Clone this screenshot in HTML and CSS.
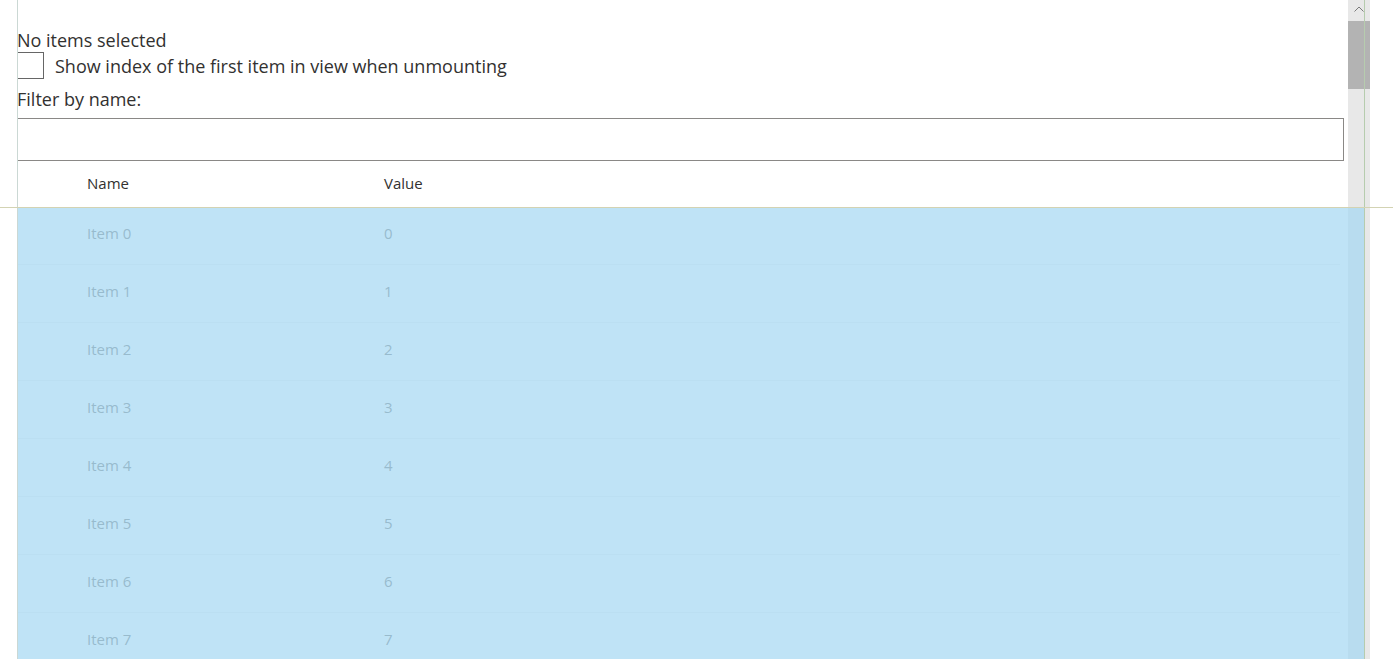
FILE: index.html
```html
<!DOCTYPE html>
<html>
<head>
<meta charset="utf-8">
<link rel="stylesheet" href="styles.css">
</head>
<body>
<div class="page">
  <div class="content">
    <div class="status">No items selected</div>
    <label class="check-row">
      <span class="check-box"></span>
      <span class="check-label">Show index of the first item in view when unmounting</span>
    </label>
    <div class="filter-label">Filter by name:</div>
    <div class="filter-input"></div>
    <div class="list">
      <div class="row header">
        <div class="cell name">Name</div>
        <div class="cell value">Value</div>
      </div>
      <div class="row"><div class="cell name">Item 0</div><div class="cell value">0</div></div>
      <div class="row"><div class="cell name">Item 1</div><div class="cell value">1</div></div>
      <div class="row"><div class="cell name">Item 2</div><div class="cell value">2</div></div>
      <div class="row"><div class="cell name">Item 3</div><div class="cell value">3</div></div>
      <div class="row"><div class="cell name">Item 4</div><div class="cell value">4</div></div>
      <div class="row"><div class="cell name">Item 5</div><div class="cell value">5</div></div>
      <div class="row"><div class="cell name">Item 6</div><div class="cell value">6</div></div>
      <div class="row"><div class="cell name">Item 7</div><div class="cell value">7</div></div>
    </div>
  </div>
  <div class="scrollbar">
    <div class="scroll-arrow">
      <svg width="22" height="20" viewBox="0 0 22 20"><path d="M6.5 11.5 L11 7 L15.5 11.5" fill="none" stroke="#7a7a7a" stroke-width="1"/></svg>
    </div>
    <div class="scroll-thumb"></div>
  </div>
</div>
<div class="selection-overlay"></div>
<div class="guide guide-left"></div>
<div class="guide guide-right"></div>
<div class="guide guide-top"></div>
</body>
</html>
```

FILE: styles.css
```css
html, body {
  margin: 0;
  padding: 0;
  background: #ffffff;
  overflow: hidden;
  height: 659px;
}
body {
  font-family: "Open Sans", "Noto Sans", "Liberation Sans", sans-serif;
  color: #323130;
}
.page {
  display: flex;
  height: 659px;
}
.content {
  margin-left: 17px;
  width: 1331px;
  display: flex;
  flex-direction: column;
  padding-top: 28px;
}
.content > * {
  flex: none;
}
.status {
  font-size: 18px;
  line-height: 24px;
  height: 24px;
}
.check-row {
  display: flex;
  align-items: center;
  height: 27px;
}
.check-box {
  width: 25px;
  height: 25px;
  border: 1px solid #666666;
  box-sizing: content-box;
  flex: none;
}
.check-label {
  font-size: 18px;
  margin-left: 11px;
  line-height: 24px;
}
.filter-label {
  font-size: 18px;
  line-height: 24px;
  margin-top: 8px;
  height: 31px;
}
.filter-input {
  width: 1325px;
  height: 41px;
  border: 1px solid #8a8886;
}
.list {
  display: flex;
  flex-direction: column;
}
.row {
  display: flex;
  flex: none;
  height: 57px;
  border-bottom: 1px solid #f3f2f1;
  width: 1323px;
  font-size: 15px;
  color: #858381;
}
.row.header {
  height: 45px;
  border-bottom: 1px solid transparent;
  color: #323130;
  align-items: center;
}
.row.header .cell {
  margin-top: -2px;
}
.row:not(.header) {
  align-items: flex-start;
}
.row:not(.header) .cell {
  margin-top: 16px;
}
.cell {
  line-height: 20px;
}
.cell.name {
  margin-left: 70px;
  width: 297px;
}
.cell.value {
  width: 200px;
}
.scrollbar {
  width: 22px;
  background: #e8e8e8;
  flex: none;
}
.scroll-arrow {
  height: 21px;
}
.scroll-arrow svg {
  display: block;
}
.scroll-thumb {
  height: 68px;
  background: #b3b3b3;
}
.selection-overlay {
  position: absolute;
  left: 18px;
  top: 208px;
  width: 1347px;
  height: 451px;
  background: rgba(160, 214, 241, 0.68);
}
.guide {
  position: absolute;
}
.guide-left {
  left: 17px;
  top: 0;
  width: 1px;
  height: 659px;
  background: #cbd8d4;
}
.guide-right {
  left: 1364px;
  top: 0;
  width: 1px;
  height: 659px;
  background: #b6ccae;
}
.guide-top {
  left: 0;
  top: 207px;
  width: 1393px;
  height: 1px;
  background: #d3d3b3;
}
```
